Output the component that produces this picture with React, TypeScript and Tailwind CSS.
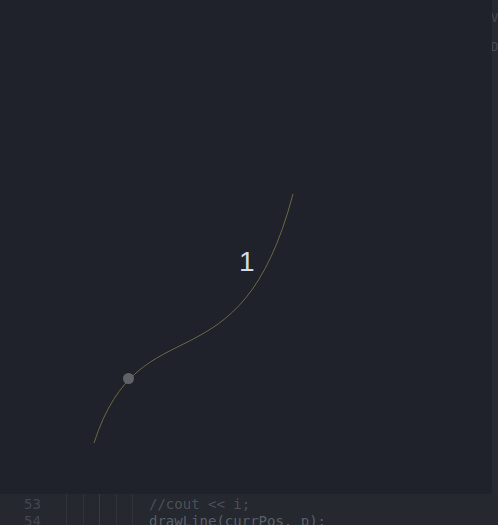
import React from "react";

export default function App() {
  return (
    <div className="w-[498px] h-[525px] overflow-hidden flex flex-col bg-[#1f222a]">
      <div className="h-[494px] flex">
        <div className="relative flex-1 bg-[#1f222a]">
          <svg width="492" height="494" className="absolute left-0 top-0">
            <path
              d="M94 443 C 140 300, 240 395, 293 194"
              fill="none"
              stroke="#6a6843"
              strokeWidth="1"
            />
            <circle cx="128.5" cy="378.5" r="5.5" fill="#5f6368" />
          </svg>
          <div
            className="absolute left-[239px] top-[248px] text-[28px] leading-none text-[#d3dbe4]"
            style={{ fontFamily: '"Liberation Sans", Arial, sans-serif' }}
          >
            1
          </div>
        </div>
        <div
          className="w-[6px] bg-[#262931] flex flex-col text-[12px] leading-none text-[#454950] overflow-hidden"
          style={{ fontFamily: '"DejaVu Sans Mono", monospace' }}
        >
          <div className="mt-[12px] -ml-[1px]">V</div>
          <div className="mt-[17px] -ml-[1px]">D</div>
        </div>
      </div>
      <div
        className="flex-1 bg-[#25282f] flex text-[14px] leading-[17px] overflow-hidden"
        style={{ fontFamily: '"DejaVu Sans Mono", monospace' }}
      >
        <div className="w-[66px] pl-[24px] pt-[2px] text-[#41464f]">
          <div>53</div>
          <div>54</div>
        </div>
        <div className="flex h-full">
          <div className="w-[17px] border-l border-[#30333a]" />
          <div className="w-[16px] border-l border-[#30333a]" />
          <div className="w-[17px] border-l border-[#383b42]" />
          <div className="w-[16px] border-l border-[#30333a]" />
          <div className="w-[17px] border-l border-[#30333a]" />
        </div>
        <div className="pt-[2px] text-[#4c5059] whitespace-pre">
          <div>//cout &lt;&lt; i;</div>
          <div className="text-[#5a5f68]">drawLine(currPos, p);</div>
        </div>
      </div>
    </div>
  );
}
